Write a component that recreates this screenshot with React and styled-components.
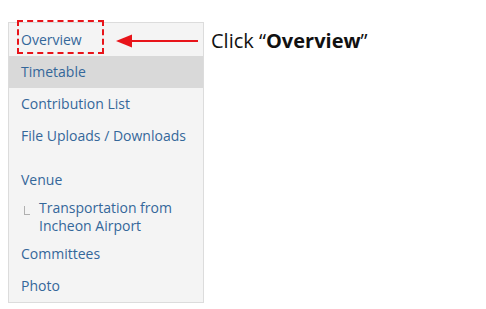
import React from 'react';
import styled, { createGlobalStyle } from 'styled-components';

const Global = createGlobalStyle`
  body {
    margin: 0;
    background: #fff;
    font-family: "Open Sans", "Noto Sans", sans-serif;
  }
`;

const Page = styled.div`
  position: relative;
  width: 486px;
  height: 309px;
  padding: 22px 0 0 8px;
  box-sizing: border-box;
`;

const Menu = styled.ul`
  list-style: none;
  margin: 0;
  padding: 1px 0 0;
  width: 194px;
  background: #f4f4f4;
  border: 1px solid #dcdcdc;
`;

const Item = styled.li`
  display: flex;
  align-items: flex-start;
  gap: 9px;
  padding: ${(p) => (p.$sub ? '3px 12px 3px 15px' : '7px 12px')};
  background: ${(p) => (p.$active ? '#d9d9d9' : 'transparent')};
  color: #34679a;
  font-size: 14px;
  line-height: 18px;
`;

const Spacer = styled.li`
  height: 12px;
`;

const Branch = styled.span`
  width: 5px;
  height: 8px;
  margin-top: 7px;
  border-left: 1px solid #b0b0b0;
  border-bottom: 1px solid #b0b0b0;
  flex-shrink: 0;
`;

const Highlight = styled.div`
  position: absolute;
  left: 17px;
  top: 20px;
  width: 83px;
  height: 30px;
  border: 2px dashed #e8141a;
`;

const Callout = styled.div`
  position: absolute;
  left: 116px;
  top: 27px;
  display: flex;
  align-items: center;
  gap: 13px;
`;

const Label = styled.span`
  font-size: 20px;
  color: #111;
  b {
    font-weight: 700;
  }
`;

export default function App() {
  return (
    <>
      <Global />
      <Page>
        <Menu>
          <Item>Overview</Item>
          <Item $active>Timetable</Item>
          <Item>Contribution List</Item>
          <Item>File Uploads / Downloads</Item>
          <Spacer />
          <Item>Venue</Item>
          <Item $sub>
            <Branch />
            <span>Transportation from Incheon Airport</span>
          </Item>
          <Item>Committees</Item>
          <Item>Photo</Item>
        </Menu>
        <Highlight />
        <Callout>
          <svg width="82" height="14" viewBox="0 0 82 14">
            <path d="M0 7 L16 0.5 L16 13.5 Z" fill="#e8141a" />
            <rect x="14" y="6" width="68" height="2" fill="#e8141a" />
          </svg>
          <Label>
            Click “<b>Overview</b>”
          </Label>
        </Callout>
      </Page>
    </>
  );
}
